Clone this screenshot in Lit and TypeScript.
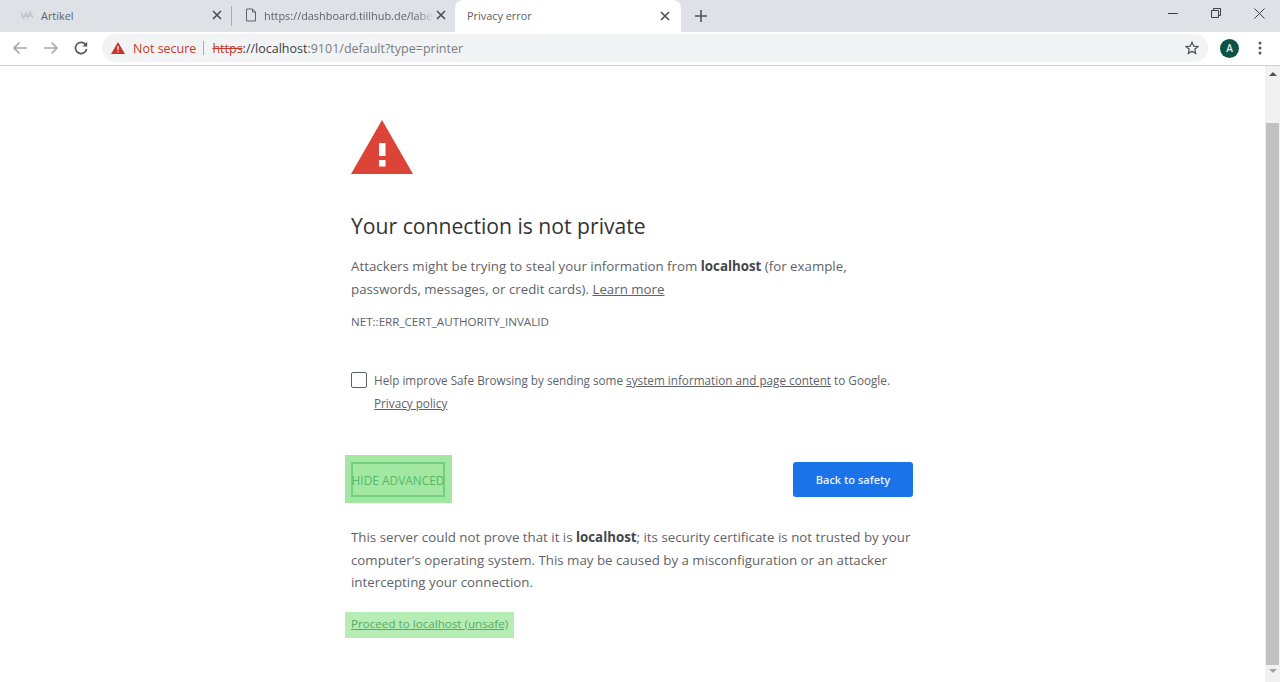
import { LitElement, html, css } from 'lit';
import { customElement } from 'lit/decorators.js';

const closeIcon = html`<svg class="x" width="10" height="10" viewBox="0 0 10 10"><path d="M1 1l8 8M9 1l-8 8" stroke="#4a4d51" stroke-width="1.6" fill="none"/></svg>`;

@customElement('app-root')
class AppRoot extends LitElement {
  static styles = css`
    :host {
      display: block;
      width: 1280px;
      height: 682px;
      overflow: hidden;
      background: #fff;
      font-family: 'Open Sans', 'Noto Sans', sans-serif;
      color: #5f6368;
    }
    .tabstrip {
      display: flex;
      align-items: stretch;
      height: 32px;
      background: #dee1e6;
    }
    .tab {
      display: flex;
      align-items: center;
      width: 224px;
      box-sizing: border-box;
      padding: 0 9px 2px 12px;
      font-size: 10.9px;
      color: #5f6368;
      white-space: nowrap;
    }
    .tab .title {
      flex: 1;
    }
    .tab.first {
      width: 231px;
      padding-left: 20px;
    }
    .tab.second {
      width: 223px;
      padding-left: 13px;
    }
    .tab.active {
      width: 226px;
      background: #fff;
      border-radius: 8px 8px 0 0;
      color: #5a5d61;
      height: 33px;
      padding-left: 12px;
      padding-right: 11px;
    }
    .fade {
      -webkit-mask-image: linear-gradient(to right, #000 88%, transparent 100%);
      mask-image: linear-gradient(to right, #000 88%, transparent 100%);
    }
    .favicon {
      margin-right: 7px;
      flex: none;
    }
    .sep {
      width: 1px;
      height: 20px;
      align-self: center;
      background: #a9acb0;
      flex: none;
    }
    .plus {
      margin-left: 14px;
      align-self: center;
    }
    .win {
      margin-left: auto;
      display: flex;
      align-items: center;
      gap: 33px;
      padding-right: 15px;
      padding-bottom: 6px;
    }
    .toolbar {
      display: flex;
      align-items: center;
      height: 34px;
      box-sizing: border-box;
      background: #fff;
      border-bottom: 1px solid #d0d1d3;
      padding: 0 11px 1px 12px;
    }
    .nav {
      display: flex;
      align-items: center;
      gap: 15px;
      margin-right: 14px;
    }
    .omnibox {
      display: flex;
      align-items: center;
      width: 1106px;
      height: 28px;
      background: #f1f3f4;
      border-radius: 14px;
      padding: 0 9px 0 9px;
      box-sizing: border-box;
      font-size: 12.5px;
      color: #7a7d81;
      white-space: nowrap;
    }
    .danger {
      color: #c5392c;
      margin-left: 8px;
    }
    .divider {
      width: 1px;
      height: 14px;
      background: #a8aaad;
      margin: 0 8px 0 7px;
    }
    .https {
      color: #c5392c;
      text-decoration: line-through;
    }
    .host {
      color: #3c4043;
    }
    .star {
      margin-left: auto;
    }
    .avatar {
      width: 19px;
      height: 19px;
      border-radius: 50%;
      background: #0b5345;
      color: #e4eeeb;
      font-size: 10px;
      font-weight: 600;
      display: flex;
      align-items: center;
      justify-content: center;
      margin-left: 12px;
      flex: none;
    }
    .dots {
      margin-left: 19px;
    }
    .viewport {
      display: flex;
      height: 616px;
    }
    .page {
      flex: 1;
      padding: 54px 0 0 351px;
    }
    .content {
      width: 562px;
    }
    .scrollbar {
      width: 15px;
      background: #f1f1f1;
      display: flex;
      flex-direction: column;
      align-items: center;
      box-sizing: border-box;
      padding-top: 6px;
    }
    .thumb {
      width: 13px;
      height: 542px;
      background: #c1c1c1;
      margin-top: 47px;
    }
    .arrow-up, .arrow-down {
      width: 0;
      height: 0;
      border-left: 4px solid transparent;
      border-right: 4px solid transparent;
    }
    .arrow-up {
      border-bottom: 4px solid #505050;
    }
    .arrow-down {
      border-top: 4px solid #a3a3a3;
      margin-top: 4px;
    }
    .icon {
      display: block;
    }
    h1 {
      font-size: 21.15px;
      font-weight: 400;
      line-height: 28px;
      color: #333;
      margin: 38px 0 0;
    }
    p {
      margin: 0;
    }
    .lead {
      font-size: 13.3px;
      line-height: 22.5px;
      margin-top: 15px;
      color: #5f6368;
    }
    .lead b, .detail b {
      color: #44474b;
    }
    a {
      color: inherit;
      text-decoration: underline;
    }
    .code {
      font-size: 11.6px;
      line-height: 16px;
      margin-top: 14px;
      color: #5f6368;
    }
    .opt {
      display: flex;
      margin-top: 42px;
      font-size: 11.73px;
      line-height: 23px;
    }
    .check {
      width: 14px;
      height: 14px;
      border: 1px solid #5f6368;
      border-radius: 2px;
      margin: 0 7px 0 0;
      flex: none;
    }
    .opt-text {
      margin-top: -3px;
    }
    .actions {
      display: flex;
      justify-content: space-between;
      align-items: center;
      margin-top: 40px;
    }
    .hl-btn {
      margin-left: -6px;
      padding: 7px 7px 6px 6px;
      background: #a2e7a2;
    }
    .adv {
      box-sizing: border-box;
      width: 94px;
      height: 35px;
      border: 2px solid #74d081;
      font-size: 11.9px;
      color: #58b96a;
      display: flex;
      align-items: center;
      justify-content: center;
      white-space: nowrap;
    }
    .safety {
      width: 120px;
      height: 35px;
      border-radius: 3px;
      background: #1a73e8;
      color: #e8f1fd;
      font-size: 11px;
      font-weight: 600;
      display: flex;
      align-items: center;
      justify-content: center;
    }
    .detail {
      font-size: 13.3px;
      line-height: 22.5px;
      margin-top: 23px;
    }
    .hl-link {
      display: inline-block;
      margin: 18px 0 0 -6px;
      padding: 0 6px;
      height: 26px;
      line-height: 24px;
      font-size: 11.65px;
      background: #b6edb4;
      color: #5aa968;
    }
  `;

  render() {
    return html`
      <div class="tabstrip">
        <div class="tab first">
          <svg class="favicon" width="14" height="10" viewBox="0 0 14 10"><path d="M1 2l2.500 6L6 3l1.500 5L10 2l3 6M1 6h12" fill="none" stroke="#c2c4c7" stroke-width="1.300"/></svg>
          <span class="title">Artikel</span>${closeIcon}
        </div>
        <div class="sep"></div>
        <div class="tab second">
          <svg class="favicon" width="12" height="14" viewBox="0 0 12 14"><path d="M1.500 1h6l3 3v9h-9zM7.500 1v3h3" fill="none" stroke="#5f6368" stroke-width="1"/></svg>
          <span class="title fade">https://dashboard.tillhub.de/labe</span>${closeIcon}
        </div>
        <div class="tab active">
          <span class="title">Privacy error</span>${closeIcon}
        </div>
        <svg class="plus" width="12" height="12" viewBox="0 0 12 12"><path d="M6 0v12M0 6h12" stroke="#505356" stroke-width="1.6"/></svg>
        <div class="win">
          <svg width="10" height="10" viewBox="0 0 10 10"><path d="M0 5.500h10" stroke="#3c3f42" stroke-width="1"/></svg>
          <svg width="10" height="10" viewBox="0 0 10 10"><path d="M.5 2.500h7v7h-7zM2.500 2.500v-2h7v7h-2" fill="none" stroke="#3c3f42" stroke-width="1"/></svg>
          <svg width="11" height="11" viewBox="0 0 11 11"><path d="M.5.5l10 10M10.500.5l-10 10" stroke="#3c3f42" stroke-width="1"/></svg>
        </div>
      </div>
      <div class="toolbar">
        <div class="nav">
          <svg width="16" height="14" viewBox="0 0 16 14"><path d="M15 7H2M7.500 1.500L2 7l5.500 5.500" fill="none" stroke="#a5a8ac" stroke-width="1.700"/></svg>
          <svg width="16" height="14" viewBox="0 0 16 14"><path d="M1 7h13M8.500 1.500L14 7l-5.500 5.500" fill="none" stroke="#a5a8ac" stroke-width="1.700"/></svg>
          <svg width="14" height="14" viewBox="0 0 14 14"><path d="M12 4.200A5.600 5.600 0 1 0 12.600 8" fill="none" stroke="#55585c" stroke-width="1.700"/><path d="M13.200 .8v4.700H8.500z" fill="#55585c"/></svg>
        </div>
        <div class="omnibox">
          <svg width="14" height="12" viewBox="0 0 14 12"><path d="M7 0l7 12H0z" fill="#c5392c"/><path d="M6.400 4h1.200v4H6.400zM6.400 9h1.200v1.200H6.400z" fill="#fff"/></svg>
          <span class="danger">Not secure</span>
          <span class="divider"></span>
          <span><span class="https">https</span><span class="host">://localhost</span>:9101/default?type=printer</span>
          <svg class="star" width="14" height="14" viewBox="0 0 14 14"><path d="M7 1.300l1.750 3.800 4.100.45-3.050 2.800.85 4.050L7 10.350 3.350 12.400l.85-4.050-3.050-2.800 4.100-.45z" fill="none" stroke="#55585c" stroke-width="1.300"/></svg>
        </div>
        <div class="avatar">A</div>
        <svg class="dots" width="4" height="14" viewBox="0 0 4 14"><circle cx="2" cy="2" r="1.500" fill="#55585c"/><circle cx="2" cy="7" r="1.500" fill="#55585c"/><circle cx="2" cy="12" r="1.500" fill="#55585c"/></svg>
      </div>
      <div class="viewport">
        <div class="page">
          <div class="content">
            <svg class="icon" width="62" height="54" viewBox="0 0 62 54">
              <path d="M31 0l31 54H0z" fill="#db4437"/>
              <path d="M28 23h6.500v13H28zM28 40h6.500v6.500H28z" fill="#fff"/>
            </svg>
            <h1>Your connection is not private</h1>
            <p class="lead">Attackers might be trying to steal your information from <b>localhost</b> (for example, passwords, messages, or credit cards). <a>Learn more</a></p>
            <p class="code">NET::ERR_CERT_AUTHORITY_INVALID</p>
            <div class="opt">
              <span class="check"></span>
              <div class="opt-text">Help improve Safe Browsing by sending some <a>system information and page content</a> to Google.<br><a>Privacy policy</a></div>
            </div>
            <div class="actions">
              <div class="hl-btn"><div class="adv">HIDE ADVANCED</div></div>
              <div class="safety">Back to safety</div>
            </div>
            <p class="detail">This server could not prove that it is <b>localhost</b>; its security certificate is not trusted by your computer's operating system. This may be caused by a misconfiguration or an attacker intercepting your connection.</p>
            <a class="hl-link">Proceed to localhost (unsafe)</a>
          </div>
        </div>
        <div class="scrollbar">
          <div class="arrow-up"></div>
          <div class="thumb"></div>
          <div class="arrow-down"></div>
        </div>
      </div>
    `;
  }
}
